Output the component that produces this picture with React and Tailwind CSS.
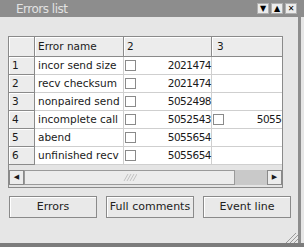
import React from "react";

const rows = [
  { n: 1, name: "incor send size", v: "2021474" },
  { n: 2, name: "recv checksum", v: "2021474" },
  { n: 3, name: "nonpaired send", v: "5052498" },
  { n: 4, name: "incomplete call", v: "5052543", extra: "5055654" },
  { n: 5, name: "abend", v: "5055654" },
  { n: 6, name: "unfinished recv", v: "5055654" },
];

const Check = () => (
  <span className="block w-[11px] h-[11px] bg-white border border-[#8a8a8a] shrink-0" />
);

const ErrorsList = () => {
  return (
    <div
      className="w-[304px] h-[247px] bg-[#e6e6e6] flex flex-col overflow-hidden text-[#1a1a1a]"
      style={{ fontFamily: '"DejaVu Sans", Verdana, sans-serif' }}
    >
      {/* Barra de titulo */}
      <div className="h-[17px] bg-[#8d8d8d] flex items-center pl-[16px] pr-[7px] shrink-0">
        <span className="text-[12px] text-[#e2e2e2] leading-none tracking-[-0.5px]">Errors list</span>
        <div className="ml-auto flex gap-[2px]">
          {["▼", "▲", "✕"].map((g) => (
            <span
              key={g}
              className="w-[12px] h-[11px] bg-[#ececec] border border-[#b0b0b0] flex items-center justify-center text-[8px] font-bold leading-none text-black"
            >
              {g}
            </span>
          ))}
        </div>
      </div>

      {/* Cuerpo */}
      <div className="flex-1 flex">
        <div className="flex-1 flex flex-col pl-[8px] pt-[19px]">
          {/* Tabla */}
          <div className="w-[275px] h-[152px] border border-[#8a8a8a] flex flex-col bg-[#e4e4e4] text-[10.5px]">
            <div className="h-[20px] flex overflow-hidden shrink-0">
              <div className="w-[26px] shrink-0 bg-[#ececec] border-r border-b border-[#8a8a8a] shadow-[inset_1px_1px_0_#ffffff]" />
              <div className="w-[89px] shrink-0 bg-[#ececec] border-r border-b border-[#8a8a8a] pl-[3px] flex items-center shadow-[inset_1px_1px_0_#ffffff]">
                Error name
              </div>
              <div className="w-[88px] shrink-0 bg-[#ececec] border-r border-b border-[#8a8a8a] pl-[3px] flex items-center shadow-[inset_1px_1px_0_#ffffff]">
                2
              </div>
              <div className="w-[88px] shrink-0 bg-[#ececec] border-r border-b border-[#8a8a8a] pl-[5px] flex items-center shadow-[inset_1px_1px_0_#ffffff]">
                3
              </div>
            </div>
            {rows.map((r) => (
              <div key={r.n} className="h-[18px] flex overflow-hidden shrink-0">
                <div className="w-[26px] shrink-0 bg-[#ececec] border-r border-b border-[#8a8a8a] pl-[3px] flex items-center shadow-[inset_1px_1px_0_#ffffff]">
                  {r.n}
                </div>
                <div className="w-[89px] shrink-0 bg-white border-r border-b border-[#cfcfcf] pl-[3px] flex items-center whitespace-nowrap overflow-hidden">
                  {r.name}
                </div>
                <div className="w-[88px] shrink-0 bg-white border-r border-b border-[#cfcfcf] pl-[1px] flex items-center">
                  <Check />
                  <span className="ml-auto tracking-[-0.5px]">{r.v}</span>
                </div>
                <div className="w-[88px] shrink-0 bg-white border-b border-[#cfcfcf] pl-[1px] flex items-center">
                  {r.extra && <Check />}
                  {r.extra && <span className="ml-auto tracking-[-0.5px]">{r.extra}</span>}
                </div>
              </div>
            ))}
            <div className="flex-1" />
            {/* Barra de desplazamiento */}
            <div className="h-[15px] flex mb-[2px] shrink-0 bg-[#c9c9c9]">
              <span className="w-[15px] bg-[#ececec] border border-[#8a8a8a] flex items-center justify-center text-[7px] leading-none">
                ◀
              </span>
              <span className="w-[211px] bg-[#ececec] border border-[#9a9a9a] flex items-center justify-center">
                <svg width="14" height="9" viewBox="0 0 14 9">
                  {[0, 3, 6, 9].map((x) => (
                    <line key={x} x1={x + 1} y1="8" x2={x + 5} y2="1" stroke="#c2c2c2" strokeWidth="1" />
                  ))}
                </svg>
              </span>
              <span className="flex-1" />
              <span className="w-[15px] bg-[#ececec] border border-[#8a8a8a] flex items-center justify-center text-[7px] leading-none">
                ▶
              </span>
            </div>
          </div>

          {/* Botones */}
          <div className="flex gap-[9px] mt-[8px] pl-[1px]">
            {["Errors", "Full comments", "Event line"].map((b) => (
              <button
                key={b}
                className="w-[88px] h-[22px] border border-[#8a8a8a] bg-[#e9e9e9] text-[11px] text-[#222] whitespace-nowrap shadow-[inset_1px_1px_0_#ffffff]"
              >
                {b}
              </button>
            ))}
          </div>

          <div className="mt-auto flex justify-end">
            <svg width="12" height="10" viewBox="0 0 12 10">
              {[0, 4, 8].map((o) => (
                <line key={o} x1={o} y1="10" x2="12" y2={o - 2} stroke="#9a9a9a" strokeWidth="1" />
              ))}
            </svg>
          </div>
        </div>
        <div className="w-[3px] bg-[#8d8d8d]" />
        <div className="w-[3px]" />
      </div>

      <div className="h-[4px] bg-[#7c7c7c] shrink-0" />
    </div>
  );
};

export default function App() {
  return <ErrorsList />;
}
